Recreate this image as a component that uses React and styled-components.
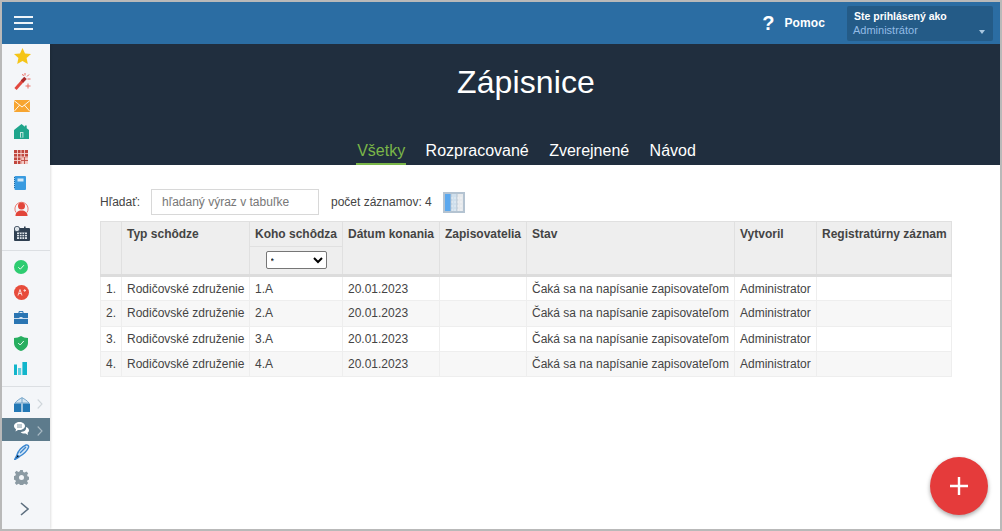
import styled, { createGlobalStyle } from "styled-components";

const GlobalStyle = createGlobalStyle`
  html, body {
    margin: 0;
    padding: 0;
    height: 100%;
    overflow: hidden;
  }
  body {
    font-family: "Liberation Sans", Arial, sans-serif;
    color: #333;
  }
`;

const rows = ["1.A", "2.A", "3.A", "4.A"];

const StarIcon = () => (
  <svg width="17" height="16" viewBox="0 0 17 16">
    <path fill="#f5c518" d="M8.5 0l2.5 5.4 6 .7-4.4 4 1.2 5.900-5.300-3-5.300 3 1.200-5.900L0 6.100l6-.7z" />
  </svg>
);

const WandIcon = () => (
  <svg width="17" height="17" viewBox="0 0 17 17">
    <path stroke="#e2483f" strokeWidth="3" d="M1.500 16L9 7.500" />
    <path stroke="#a92b2b" strokeWidth="3.400" d="M8 8.600L11.500 4.800" />
    <path stroke="#ec6a60" strokeWidth="1" fill="none" d="M11 0v2.500M15 1.500l-2 2M16.500 6h-3M8.500 1l1 2M14 10.500v5M11.500 13h5" />
  </svg>
);

const MailIcon = () => (
  <svg width="16" height="12" viewBox="0 0 16 12">
    <rect width="16" height="12" fill="#f7a531" />
    <path stroke="#fff" strokeWidth="0.9" fill="none" d="M0 .5l8 6.500 8-6.500M0 11.500l5.600-6.400M16 11.500l-5.600-6.400" />
  </svg>
);

const HomeIcon = () => (
  <svg width="15" height="15" viewBox="0 0 15 15">
    <path fill="#1fa58c" d="M7.500 0l3.400 2.700V1.400h1.800v2.800L15 6v9H0V6z" />
    <rect x="6" y="8" width="3.400" height="5.600" fill="#bfe6dd" />
    <rect x="7" y="9" width="1.400" height="4.600" fill="#1fa58c" />
  </svg>
);

const GridIcon = () => (
  <svg width="14" height="14" viewBox="0 0 14 14">
    <rect width="14" height="14" fill="#c0473f" />
    <path stroke="#f6d6d2" strokeWidth="0.9" d="M0 3.500h14M0 7h14M0 10.500h14M3.500 0v14M7 0v14M10.500 0v14" />
    <rect x="7.500" y="7.500" width="6.500" height="6.500" fill="#f3c7c2" />
    <path stroke="#c0473f" strokeWidth="0.9" d="M7 10.500h7M10.500 7v7" />
  </svg>
);

const NotebookIcon = () => (
  <svg width="12" height="14" viewBox="0 0 12 14">
    <rect x="0.500" width="11.500" height="14" rx="1" fill="#3a9be0" />
    <rect x="3.500" y="2.500" width="6" height="3" fill="#d3e9f8" />
    <path stroke="#1c6aa6" strokeWidth="1" strokeDasharray="1 1" d="M0.500 1v12" />
  </svg>
);

const PersonIcon = () => (
  <svg width="15" height="16" viewBox="0 0 15 16">
    <path fill="none" stroke="#e8594c" strokeWidth="0.8" d="M2 12.500A6.600 6.600 0 1 1 13 12.500" />
    <circle cx="7.500" cy="6" r="3.500" fill="#e2453a" />
    <path fill="#e2453a" d="M1.500 15c.3-3 2.600-4 4.500-4.600h3c1.900.6 4.200 1.600 4.500 4.600v1h-12z" />
  </svg>
);

const CalendarIcon = () => (
  <svg width="16" height="15" viewBox="0 0 16 15">
    <rect y="2" width="16" height="13" rx="1" fill="#2f3f51" />
    <rect x="3" y="6.500" width="10" height="6.500" fill="#dde3e9" />
    <path stroke="#2f3f51" strokeWidth="0.8" d="M3 8.500h10M3 10.700h10M5.500 6.500V13M8 6.500V13M10.500 6.500V13" />
    <circle cx="3" cy="3" r="2.700" fill="#dde3e9" stroke="#2f3f51" strokeWidth="0.8" />
    <rect x="10" y="0.500" width="1.600" height="3" fill="#2f3f51" />
  </svg>
);

const CheckCircleIcon = () => (
  <svg width="14" height="14" viewBox="0 0 14 14">
    <circle cx="7" cy="7" r="7" fill="#2ecc71" />
    <path stroke="#e9fbf0" strokeWidth="1" fill="none" d="M4.300 7.200l2 2 3.600-4" />
  </svg>
);

const GradeIcon = () => (
  <svg width="15" height="15" viewBox="0 0 15 15">
    <circle cx="7.500" cy="7.500" r="7.500" fill="#e74c3c" />
    <path stroke="#fbd9d5" strokeWidth="1" fill="none" d="M4 10.500l2-6 2 6M4.800 8.500h2.400M9.500 5.500h2.500M10.700 4.200v2.600" />
  </svg>
);

const BriefcaseIcon = () => (
  <svg width="14" height="13" viewBox="0 0 14 13">
    <path fill="none" stroke="#2a75b3" strokeWidth="1" d="M5 2.500V.6h4v1.900" />
    <rect y="2" width="14" height="5" fill="#2a75b3" />
    <rect y="7.800" width="14" height="5.200" fill="#2a75b3" />
    <rect x="5.500" y="6" width="3" height="2" fill="#cfe2f2" />
  </svg>
);

const ShieldIcon = () => (
  <svg width="14" height="15" viewBox="0 0 14 15">
    <path fill="#27ae60" d="M7 0c2 1.300 4.300 1.900 7 2v5c0 3.600-2.800 6.600-7 8-4.200-1.400-7-4.400-7-8V2c2.700-.1 5-.7 7-2z" />
    <path stroke="#e9fbf0" strokeWidth="1" fill="none" d="M4.200 7l2 2 3.600-4" />
  </svg>
);

const ChartIcon = () => (
  <svg width="13" height="13" viewBox="0 0 13 13">
    <rect y="2.500" width="3" height="10.500" fill="#12b5cb" />
    <rect x="4" y="6" width="3.200" height="7" fill="#5fd0e0" />
    <rect x="8.400" y="0" width="4.600" height="13" fill="#12b5cb" />
  </svg>
);

const BookIcon = () => (
  <svg width="16" height="15" viewBox="0 0 16 15">
    <path fill="#d5e5f1" stroke="#5f97c2" strokeWidth="0.8" d="M1 6C3 3.500 5.500 2 8 .6 10.500 2 13 3.500 15 6z" />
    <path stroke="#5f97c2" strokeWidth="0.8" d="M8 1v5" />
    <path fill="#2378b5" d="M0 6.500h7.400V15H0zM8.600 6.500H16V15H8.600z" />
  </svg>
);

const ChatIcon = () => (
  <svg width="15" height="14" viewBox="0 0 15 14">
    <path fill="#fff" d="M5.500 0C8.500 0 11 1.700 11 4S8.500 8 5.500 8c-.6 0-1 0-1.500-.1L1.500 9.500l.5-2.300C.8 6.500 0 5.300 0 4 0 1.700 2.500 0 5.500 0z" />
    <path fill="#fff" d="M12 5c1.700.5 3 1.800 3 3.300 0 1-.5 1.900-1.400 2.500l.4 2.200-2.400-1.500c-2.100.3-4-.2-5-1.600 3 .2 6-1.400 5.400-4.900z" />
    <path stroke="#5d7b8c" strokeWidth="0.8" d="M3 3h5M3 5h5" />
  </svg>
);

const PenIcon = () => (
  <svg width="16" height="16" viewBox="0 0 16 16">
    <path fill="#d6e7f6" stroke="#3a86d0" strokeWidth="1.400" d="M3 11C4 7 8 2.500 12 1c2-.5 3 1 2.500 2.500C13 7 9 10.500 5.500 12.500L3 11zM6 9l6-6" />
    <path stroke="#3a86d0" strokeWidth="1.400" d="M3 11l-2.500 4.800 4.800-3" />
  </svg>
);

const GearIcon = () => (
  <svg width="15" height="15" viewBox="0 0 15 15">
    <path fill="#8b9aa3" fillRule="evenodd" d="M6.200 0h2.600l.4 2 1.500.6 1.700-1.100 1.800 1.800-1.100 1.700.6 1.500 2 .4v2.600l-2 .4-.6 1.500 1.100 1.700-1.800 1.800-1.700-1.100-1.500.6-.4 2H6.200l-.4-2-1.500-.6-1.700 1.100-1.800-1.800 1.100-1.700-.6-1.500-2-.4V6.200l2-.4.6-1.500-1.100-1.700 1.800-1.800 1.700 1.100 1.500-.6zM7.500 5a2.500 2.500 0 1 0 0 5 2.500 2.500 0 0 0 0-5z" />
  </svg>
);

const ColumnsIcon = () => (
  <svg width="22" height="21" viewBox="0 0 22 21">
    <rect width="22" height="21" fill="#b4c3d1" />
    <rect x="2" y="2" width="5.500" height="17" fill="#5ba8ee" />
    <rect x="8.500" y="2" width="5" height="17" fill="#cfdfec" />
    <rect x="14.500" y="2" width="5.500" height="17" fill="#e6e9ec" />
    <path stroke="#fff" strokeDasharray="1 2" d="M8.500 6h11.500M8.500 10h11.500M8.500 14h11.500M8.500 18h11.500" />
  </svg>
);

const sideGroups = [
  [StarIcon, WandIcon, MailIcon, HomeIcon, GridIcon, NotebookIcon, PersonIcon, CalendarIcon],
  [CheckCircleIcon, GradeIcon, BriefcaseIcon, ShieldIcon, ChartIcon],
];

const Chevron = ({ color = "#cfd6db" }) => (
  <svg width="6" height="10" viewBox="0 0 6 10">
    <path fill="none" stroke={color} strokeWidth="1.100" d="M.7.500L5 5 .7 9.500" />
  </svg>
);

const App = () => {
  return (
    <Frame>
      <GlobalStyle />
      <TopBar>
        <MenuButton aria-label="menu">
          <span />
          <span />
          <span />
        </MenuButton>
        <HelpLink>
          <HelpMark>?</HelpMark>
          Pomoc
        </HelpLink>
        <UserBox>
          <UserLabel>Ste prihlásený ako</UserLabel>
          <UserName>Administrátor</UserName>
          <Caret />
        </UserBox>
      </TopBar>
      <Body>
        <Sidebar>
          {sideGroups.map((group, i) => (
            <SideGroup key={i}>
              {group.map((Icon, j) => (
                <SideItem key={j}>
                  <Icon />
                </SideItem>
              ))}
            </SideGroup>
          ))}
          <LastGroup>
            <SideItem $h={27}>
              <BookIcon />
              <ItemArrow>
                <Chevron />
              </ItemArrow>
            </SideItem>
            <SideItem $h={23} $active>
              <ChatIcon />
              <ItemArrow>
                <Chevron color="#a9bac4" />
              </ItemArrow>
            </SideItem>
            <SideItem $h={23}>
              <PenIcon />
            </SideItem>
            <SideItem $h={27}>
              <GearIcon />
            </SideItem>
            <Expand>
              <svg width="9" height="14" viewBox="0 0 9 14">
                <path fill="none" stroke="#5d6f7f" strokeWidth="1.600" d="M1 1l7 6-7 6" />
              </svg>
            </Expand>
          </LastGroup>
        </Sidebar>
        <Main>
          <Hero>
            <Title>Zápisnice</Title>
            <Tabs>
              <Tab $active>Všetky</Tab>
              <Tab>Rozpracované</Tab>
              <Tab>Zverejnené</Tab>
              <Tab>Návod</Tab>
            </Tabs>
          </Hero>
          <Content>
            <Toolbar>
              <SearchLabel>Hľadať:</SearchLabel>
              <SearchInput placeholder="hľadaný výraz v tabuľke" />
              <Count>počet záznamov: 4</Count>
              <ColumnsButton>
                <ColumnsIcon />
              </ColumnsButton>
            </Toolbar>
            <Table>
              <colgroup>
                <col style={{ width: 21 }} />
                <col style={{ width: 128 }} />
                <col style={{ width: 93 }} />
                <col style={{ width: 97 }} />
                <col style={{ width: 87 }} />
                <col style={{ width: 208 }} />
                <col style={{ width: 82 }} />
                <col style={{ width: 135 }} />
              </colgroup>
              <thead>
                <tr>
                  <Th rowSpan={2}></Th>
                  <Th rowSpan={2}>Typ schôdze</Th>
                  <Th>Koho schôdza</Th>
                  <Th rowSpan={2}>Dátum konania</Th>
                  <Th rowSpan={2}>Zapisovatelia</Th>
                  <Th rowSpan={2}>Stav</Th>
                  <Th rowSpan={2}>Vytvoril</Th>
                  <Th rowSpan={2}>Registratúrny záznam</Th>
                </tr>
                <tr>
                  <FilterTh>
                    <FilterSelect defaultValue="*">
                      <option>*</option>
                    </FilterSelect>
                  </FilterTh>
                </tr>
              </thead>
              <tbody>
                {rows.map((cls, i) => (
                  <Row key={cls}>
                    <NumCell>{i + 1}.</NumCell>
                    <Td>Rodičovské združenie</Td>
                    <Td>{cls}</Td>
                    <Td>20.01.2023</Td>
                    <Td></Td>
                    <Td>Čaká sa na napísanie zapisovateľom</Td>
                    <Td>Administrator</Td>
                    <Td></Td>
                  </Row>
                ))}
              </tbody>
            </Table>
          </Content>
        </Main>
      </Body>
      <Fab aria-label="add">
        <svg width="18" height="18" viewBox="0 0 18 18">
          <path stroke="#fff" strokeWidth="2.400" d="M9 0v18M0 9h18" />
        </svg>
      </Fab>
    </Frame>
  );
};

const Frame = styled.div`
  width: 1002px;
  height: 531px;
  box-sizing: border-box;
  border: 2px solid #b9b9b9;
  display: flex;
  flex-direction: column;
  position: relative;
  background: white;
  overflow: hidden;
`;

const TopBar = styled.header`
  height: 42px;
  flex: none;
  background: #2b6da3;
  display: flex;
  align-items: center;
  padding-left: 12px;
  position: relative;
  z-index: 2;
`;

const MenuButton = styled.div`
  width: 19px;
  display: flex;
  flex-direction: column;
  gap: 4px;

  span {
    height: 2px;
    background: #eef4f9;
  }
`;

const HelpLink = styled.div`
  margin-left: auto;
  display: flex;
  align-items: center;
  color: white;
  font-size: 12px;
  font-weight: bold;
  letter-spacing: 0.1px;
`;

const HelpMark = styled.span`
  font-size: 20px;
  font-weight: bold;
  margin-right: 10px;
`;

const UserBox = styled.div`
  width: 146px;
  height: 35px;
  box-sizing: border-box;
  margin: 0 7px 0 22px;
  padding: 3px 6px;
  background: #245b87;
  border-radius: 2px;
  position: relative;
`;

const UserLabel = styled.div`
  color: white;
  font-size: 10.5px;
  font-weight: bold;
  line-height: 14px;
  margin-left: 1px;
`;

const UserName = styled.div`
  color: #93bce6;
  font-size: 11px;
  line-height: 15px;
`;

const Caret = styled.span`
  position: absolute;
  right: 8px;
  bottom: 7px;
  border: 3.5px solid transparent;
  border-top: 4px solid #a9c7e0;
  border-bottom: none;
`;

const Body = styled.div`
  flex: 1;
  display: flex;
  min-height: 0;
`;

const Sidebar = styled.nav`
  width: 48px;
  flex: none;
  background: #f4f6f9;
  box-shadow: 1px 0 2px rgba(0, 0, 0, 0.12);
  display: flex;
  flex-direction: column;
  position: relative;
  z-index: 1;
`;

const SideGroup = styled.div`
  padding-bottom: 4.3px;
  margin-bottom: 4px;
  border-bottom: 1px solid #dcdfe3;

  &:first-child {
    margin-top: -1px;
    margin-bottom: 3px;
  }
`;

const LastGroup = styled.div`
  flex: 1;
  display: flex;
  flex-direction: column;
`;

const SideItem = styled.div`
  height: ${(p) => p.$h || 25.4}px;
  width: 100%;
  display: flex;
  align-items: center;
  padding-left: 12px;
  box-sizing: border-box;
  background: ${(p) => (p.$active ? "#5d7b8c" : "transparent")};
  position: relative;
`;

const ItemArrow = styled.span`
  position: absolute;
  left: 35px;
  top: 8px;
  line-height: 0;
`;

const Expand = styled.div`
  height: 36px;
  display: flex;
  align-items: center;
  padding-left: 18px;
`;

const Main = styled.main`
  flex: 1;
  display: flex;
  flex-direction: column;
  min-width: 0;
`;

const Hero = styled.div`
  height: 121px;
  flex: none;
  background: #202e3e;
  display: flex;
  flex-direction: column;
  align-items: center;
  color: white;
`;

const Title = styled.h1`
  margin: 20px 0 0 2px;
  font-size: 32px;
  font-weight: normal;
  line-height: 37px;
  letter-spacing: 0.1px;
`;

const Tabs = styled.div`
  margin: auto 0 0 3px;
  display: flex;
  gap: 18.4px;
`;

const Tab = styled.div`
  font-size: 16px;
  line-height: 18px;
  height: 25px;
  box-sizing: border-box;
  padding: 2px 1px 0;
  color: ${(p) => (p.$active ? "#7ab648" : "white")};
  border-bottom: 2px solid ${(p) => (p.$active ? "#7ab648" : "transparent")};
`;

const Content = styled.div`
  padding: 24px 50px 0;
  flex: 1;
`;

const Toolbar = styled.div`
  display: flex;
  align-items: center;
  height: 26px;
  margin-bottom: 6px;
  font-size: 12px;
  color: #444;
`;

const SearchLabel = styled.span`
  width: 51px;
`;

const SearchInput = styled.input`
  width: 168px;
  height: 26px;
  box-sizing: border-box;
  border: 1px solid #d8d8d8;
  padding: 0 10px;
  font: 12px "Liberation Sans", Arial, sans-serif;
  outline: none;

  &::placeholder {
    color: #777;
    opacity: 1;
  }
`;

const Count = styled.span`
  margin-left: 12px;
`;

const ColumnsButton = styled.span`
  margin-left: 11px;
  line-height: 0;
`;

const Table = styled.table`
  border-collapse: collapse;
  table-layout: fixed;
  width: 851px;
  font-size: 12px;
  color: #444;
`;

const Th = styled.th`
  background: #eee;
  border: 1px solid #e0e0e0;
  border-bottom: 3px solid #dcdcdc;
  padding: 5px;
  height: 14px;
  font-size: 12px;
  line-height: 14px;
  text-align: left;
  vertical-align: top;
  color: #444;
  white-space: nowrap;
  overflow: hidden;

  tr:first-child > &:not([rowspan]) {
    border-bottom: 1px solid #e0e0e0;
  }
`;

const FilterTh = styled(Th)`
  padding: 4px 0 0;
  height: 23px;
  text-align: center;
`;

const FilterSelect = styled.select`
  width: 61px;
  height: 18px;
  padding-top: 2px;
  font: 9px "Liberation Sans", Arial, sans-serif;
  background: white;
  border: 1px solid #767676;
  border-radius: 2px;
`;

const Row = styled.tr`
  background: white;

  &:nth-child(even) {
    background: #f7f7f7;
  }
`;

const Td = styled.td`
  border: 1px solid #eee;
  height: 25.25px;
  box-sizing: border-box;
  padding: 0 5px;
  line-height: 14px;
  white-space: nowrap;
  overflow: hidden;
`;

const NumCell = styled(Td)`
  text-align: right;
  padding: 0 5px 0 0;
`;

const Fab = styled.div`
  position: absolute;
  right: 12px;
  bottom: 14px;
  width: 58px;
  height: 58px;
  border-radius: 50%;
  background: #e53b3b;
  box-shadow: 0 2px 4px rgba(0, 0, 0, 0.35);
  display: flex;
  align-items: center;
  justify-content: center;
`;

export default App;
